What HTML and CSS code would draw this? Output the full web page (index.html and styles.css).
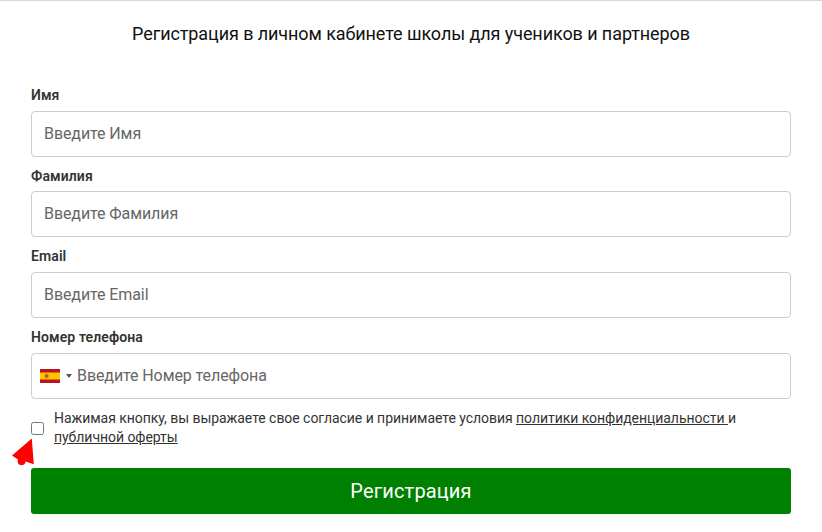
FILE: index.html
```html
<!DOCTYPE html>
<html lang="ru">
<head>
    <meta charset="UTF-8">
    <meta name="viewport" content="width=device-width, initial-scale=1.0">
    <title>Регистрация</title>
    <link rel="stylesheet" href="styles.css">
</head>
<body>
    <form class="register">
        <h1>Регистрация в личном кабинете школы для учеников и партнеров</h1>
        <div class="field">
            <label for="name">Имя</label>
            <input type="text" id="name" placeholder="Введите Имя">
        </div>
        <div class="field">
            <label for="surname">Фамилия</label>
            <input type="text" id="surname" placeholder="Введите Фамилия">
        </div>
        <div class="field">
            <label for="email">Email</label>
            <input type="email" id="email" placeholder="Введите Email">
        </div>
        <div class="field">
            <label for="phone">Номер телефона</label>
            <div class="phone">
                <svg class="flag" viewBox="0 0 20 14" width="20" height="14">
                    <rect width="20" height="14" fill="#b9141f"/>
                    <rect y="3.5" width="20" height="7" fill="#ffc400"/>
                    <circle cx="6.7" cy="7" r="2" fill="#b5651d"/>
                    <path d="M4.6 5.5v3.5M9 5.5v3.5" stroke="#d9a05a" stroke-width=".7"/>
                </svg>
                <span class="caret"></span>
                <input type="tel" id="phone" placeholder="Введите Номер телефона">
            </div>
        </div>
        <div class="agree">
            <div class="check">
                <input type="checkbox" id="agree">
                <svg class="pointer" viewBox="0 0 24 30" width="24" height="30">
                    <path d="M20.8 0.5 L22.8 26.3 L14.6 23.5 A4 4 0 1 1 7 21.5 L1 17.5 Z" fill="#f00"/>
                </svg>
            </div>
            <label for="agree">Нажимая кнопку, вы выражаете свое согласие и принимаете условия <a href="#">политики конфиденциальности </a>и <a href="#">публичной оферты</a></label>
        </div>
        <button type="submit">Регистрация</button>
    </form>
</body>
</html>
```
FILE: styles.css
```css
* {
    box-sizing: border-box;
}
body {
    margin: 0;
    border-top: 1px solid #d8d8d8;
    background: #fff;
    color: #333;
    font-family: Roboto, sans-serif;
    font-size: 14px;
}
.register {
    padding: 20px 31px 0;
}
h1 {
    margin: 0 0 39px;
    color: #111;
    font-size: 18px;
    font-weight: 400;
    line-height: 26px;
    letter-spacing: -0.085px;
    text-align: center;
}
.field {
    margin-bottom: 9.7px;
}
.field label {
    display: block;
    height: 24.9px;
    line-height: 19px;
    font-weight: 600;
    letter-spacing: 0.1px;
}
.field input {
    display: block;
    width: 100%;
    height: 46px;
    padding: 0 12px 1.5px;
    border: 1px solid #ccc;
    border-radius: 4px;
    background: #fff;
    color: #333;
    font-family: inherit;
    font-size: 16px;
    letter-spacing: -0.09px;
}
.field input::placeholder {
    color: #666;
}
.phone {
    display: flex;
    align-items: center;
    height: 46px;
    padding-left: 8px;
    border: 1px solid #ccc;
    border-radius: 4px;
}
.field .phone input {
    flex: 1;
    height: 44px;
    padding: 0 0 0 5px;
    border: 0;
}
.caret {
    margin-left: 6px;
    border-top: 4px solid #555;
    border-left: 3px solid transparent;
    border-right: 3px solid transparent;
}
.agree {
    display: flex;
    align-items: center;
    margin-top: 10.5px;
    line-height: 19px;
    letter-spacing: -0.045px;
}
.check {
    position: relative;
    flex: none;
    width: 23px;
    height: 13px;
}
.check input {
    display: block;
    width: 13px;
    height: 13px;
    margin: 0;
}
.pointer {
    position: absolute;
    top: 16px;
    left: -20px;
}
.agree a {
    color: inherit;
}
button {
    display: block;
    width: 100%;
    height: 46px;
    margin-top: 21px;
    border: 0;
    border-radius: 3px;
    background: #008000;
    color: #fff;
    font-family: inherit;
    font-size: 20px;
    letter-spacing: 0.15px;
    cursor: pointer;
}
```
